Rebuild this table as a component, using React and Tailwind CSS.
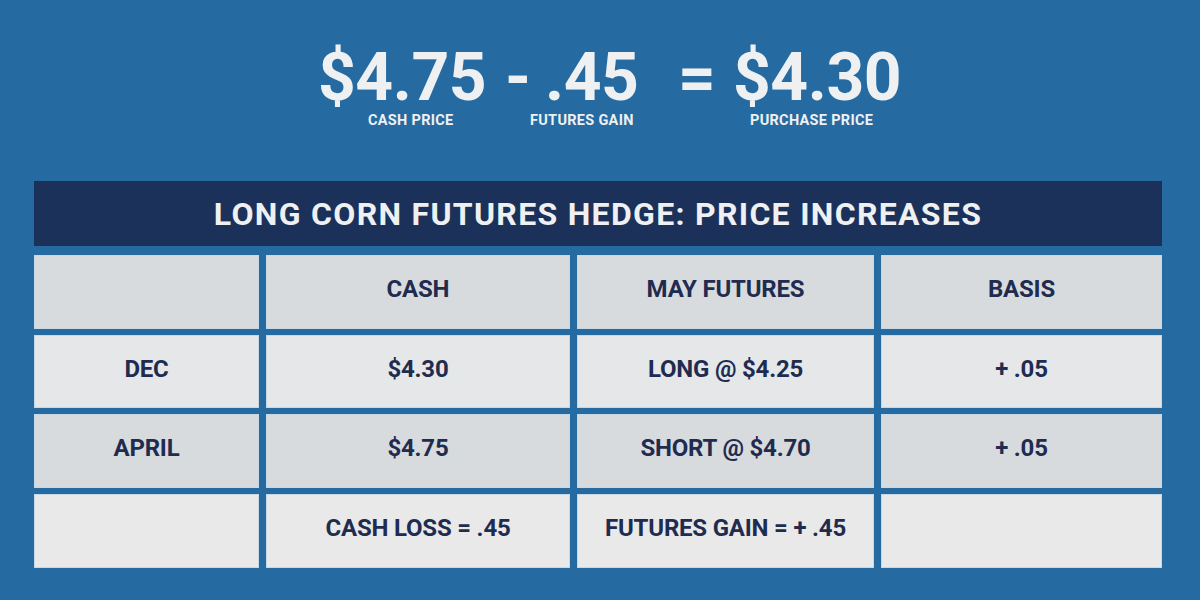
import React from "react"

const cols = "grid-cols-[225px_304px_297px_281px]"

const rows = [
  { bg: "bg-[#d8dbde]", cells: ["", "CASH", "MAY FUTURES", "BASIS"] },
  { bg: "bg-[#e6e7e8]", cells: ["DEC", "$4.30", "LONG @ $4.25", "+ .05"] },
  { bg: "bg-[#d8dbde]", cells: ["APRIL", "$4.75", "SHORT @ $4.70", "+ .05"] },
  { bg: "bg-[#e9e9e9]", cells: ["", "CASH LOSS = .45", "FUTURES GAIN = + .45", ""] },
]

export default function App() {
  return (
    <div
      className="w-[1200px] h-[600px] bg-[#256aa0] text-[#eef0f2] overflow-hidden"
      style={{ fontFamily: "Roboto, 'Liberation Sans', sans-serif" }}
    >
      {/* equation */}
      <div className="pt-[44px] pl-[318px] flex text-[66px] leading-[68px] font-bold tracking-[-0.5px]">
        <span className="w-[187px]">$4.75</span>
        <span className="w-[40px]">-</span>
        <span className="w-[133px]">.45</span>
        <span className="w-[55px]">=</span>
        <span>$4.30</span>
      </div>
      <div className="mt-[1px] pl-[368px] flex text-[14.5px] leading-[16px] font-bold tracking-[0.3px]">
        <span className="w-[162px]">CASH PRICE</span>
        <span className="w-[220px]">FUTURES GAIN</span>
        <span>PURCHASE PRICE</span>
      </div>

      <div className="w-[1128px] ml-[34px] mt-[52px]">
        <div className="h-[65px] bg-[#1c3159] flex items-center justify-center">
          <h1 className="text-[32px] font-bold text-[#eef0f2] tracking-[1.3px]">
            LONG CORN FUTURES HEDGE: PRICE INCREASES
          </h1>
        </div>
        <div className={`mt-[9px] grid ${cols} grid-rows-[74px_73px_74px_74px] gap-x-[7px] gap-y-[6px]`}>
          {rows.map((row, i) =>
            row.cells.map((c, j) => (
              <div
                key={`${i}-${j}`}
                className={`${row.bg} border border-[#c8d8e5] flex items-center justify-center pb-[6px] text-[24px] font-bold text-[#1f2c4f] tracking-[-0.2px]`}
              >
                {c}
              </div>
            ))
          )}
        </div>
      </div>
    </div>
  )
}
